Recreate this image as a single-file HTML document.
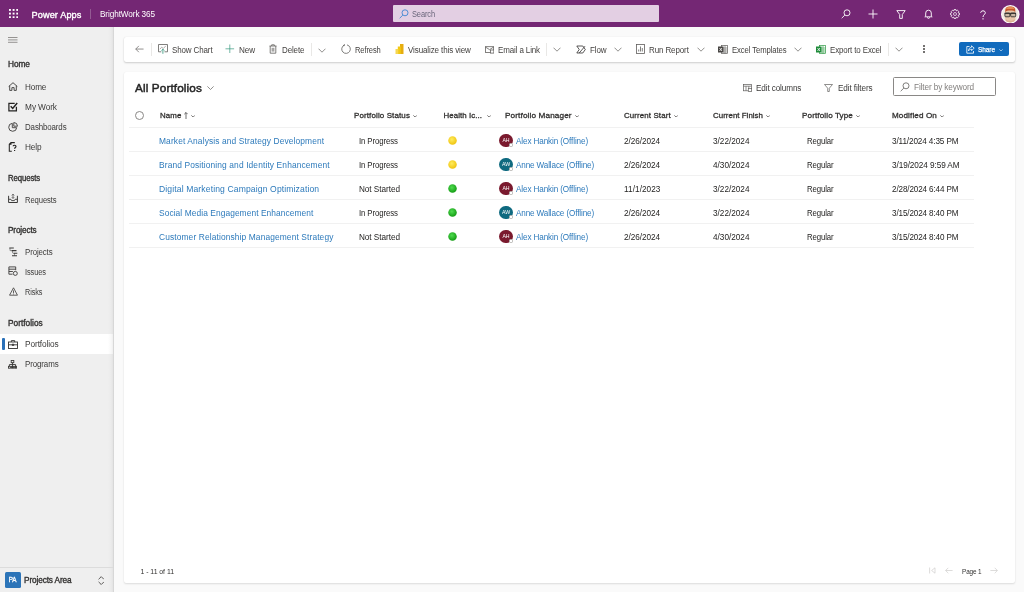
<!DOCTYPE html>
<html><head><meta charset="utf-8">
<style>
*{box-sizing:border-box;margin:0;padding:0}
body{will-change:transform;position:relative}
html,body{width:1024px;height:592px;overflow:hidden;background:#fafafa;font-family:"Liberation Sans",sans-serif;color:#323130}
.abs{position:absolute}
#top{position:absolute;left:0;top:0;width:1024px;height:27px;background:#742774;color:#fff}
#top .t{position:absolute;white-space:nowrap;line-height:1}
#side{position:absolute;left:0;top:27px;width:114px;height:565px;background:linear-gradient(to right,#efefef 0,#efefef 108px,#ebebeb 111px,#e3e3e3 113px,#d6d6d6 113px,#d9d9d9 114px)}
#side .h{position:absolute;left:8px;font-size:8.3px;-webkit-text-stroke:.35px #323130;color:#323130;line-height:1;white-space:nowrap}
#side .i{position:absolute;left:25.1px;font-size:8.3px;color:#3b3a39;line-height:1;white-space:nowrap}
#side svg{position:absolute;z-index:2}
#cmd{position:absolute;left:124px;top:37px;width:891px;height:25px;background:#fff;border-radius:2px;box-shadow:0 1px 2px rgba(0,0,0,.18),0 0 1px rgba(0,0,0,.1)}
#cmd .c{position:absolute;top:9.4px;font-size:8.3px;color:#444240;line-height:1;white-space:nowrap}
#cmd svg{position:absolute}
#card{position:absolute;left:123.600px;top:71.500px;width:891.400px;height:511.5px;background:#fff;border-radius:2px;box-shadow:0 1px 2px rgba(0,0,0,.12),0 0 1px rgba(0,0,0,.06)}
.txt{position:absolute;white-space:nowrap;line-height:1}
.hd{font-size:7.9px;-webkit-text-stroke:.3px #323130;color:#323130}
.cell{font-size:8.2px;color:#252423}
.lnk{font-size:8.4px;color:#2d7abb}
.row{position:absolute;left:129px;width:845px;height:1px;background:#f1f1f1}
.dot{position:absolute;width:8.4px;height:8.4px;margin:.3px;border-radius:50%}
.av{position:absolute;width:13.600px;height:13.600px;border-radius:50%;color:#fff;font-size:5.200px;text-align:center;line-height:13.600px;margin:-.5px 0 0 -.3px}
</style></head><body>
<div id="top">
  <svg class="abs" style="left:9px;top:8.800px" width="9.200" height="9.200" viewBox="0 0 9.200 9.200" fill="#fff"><rect x="0" y="0" width="1.900" height="1.900"></rect><rect x="3.65" y="0" width="1.900" height="1.900"></rect><rect x="7.3" y="0" width="1.900" height="1.900"></rect><rect x="0" y="3.65" width="1.900" height="1.900"></rect><rect x="3.65" y="3.65" width="1.900" height="1.900"></rect><rect x="7.3" y="3.65" width="1.900" height="1.900"></rect><rect x="0" y="7.3" width="1.900" height="1.900"></rect><rect x="3.65" y="7.3" width="1.900" height="1.900"></rect><rect x="7.3" y="7.3" width="1.900" height="1.900"></rect></svg>
  <svg class="abs" style="left:840.5px;top:9px" width="10" height="10" viewBox="0 0 10 10" fill="none" stroke="#fff" stroke-width=".9"><circle cx="6" cy="3.8" r="3"></circle><path d="M3.9 6L.7 9.2"></path></svg>
  <svg class="abs" style="left:868px;top:9px" width="10" height="10" viewBox="0 0 10 10" fill="none" stroke="#fff" stroke-width=".9"><path d="M5 .5v9M.5 5h9"></path></svg>
  <svg class="abs" style="left:895.5px;top:9.5px" width="10" height="9" viewBox="0 0 10 9" fill="none" stroke="#fff" stroke-width=".9"><path d="M.8.600h8.400L6.300 4.500v3.900H3.700V4.500z"></path></svg>
  <svg class="abs" style="left:923.5px;top:9px" width="9" height="10" viewBox="0 0 9 10" fill="none" stroke="#fff" stroke-width=".9"><path d="M1.7 7V4a2.8 2.8 0 0 1 5.6 0v3l.9.8H.8zM3.4 8.3a1.1 1.1 0 0 0 2.2 0"></path></svg>
  <svg class="abs" style="left:950.200px;top:9.200px" width="10" height="10" viewBox="0 0 10 10" fill="none" stroke="#fff" stroke-width=".85" stroke-linejoin="round"><circle cx="5" cy="5" r="1.500" stroke-width=".7"></circle><path d="M4.11 0.59L5.89 0.59L6.29 1.86L6.31 1.86L7.49 1.25L8.75 2.51L8.14 3.69L8.14 3.71L9.41 4.11L9.41 5.89L8.14 6.29L8.14 6.31L8.75 7.49L7.49 8.75L6.31 8.14L6.29 8.14L5.89 9.41L4.11 9.41L3.71 8.14L3.69 8.14L2.51 8.75L1.25 7.49L1.86 6.31L1.86 6.29L0.59 5.89L0.59 4.11L1.86 3.71L1.86 3.69L1.25 2.51L2.51 1.25L3.69 1.86L3.71 1.86z"></path></svg>
  <svg class="abs" style="left:979.600px;top:9.600px" width="6" height="10" viewBox="0 0 6 10" fill="none" stroke="#fff" stroke-width="1"><path d="M.7 2.800C.7.200 5.300.200 5.300 2.700c0 1.900-2.300 2.100-2.300 4.300M3 8.200v1.300"></path></svg>
  <svg class="abs" style="left:1001px;top:4.500px" width="18.600" height="18.600" viewBox="0 0 18.600 18.600"><circle cx="9.300" cy="9.300" r="9.300" fill="#fdf8fb"></circle><clipPath id="avc"><circle cx="9.300" cy="9.300" r="8.200"></circle></clipPath><g clip-path="url(#avc)"><rect x="0" y="0" width="19" height="19" fill="#f1e9e2"></rect><path d="M4.300 7.500C4 2.800 5 1.600 9.300 1.600s5.300 1.200 5 5.900z" fill="#c4552b"></path><path d="M5 4C5.500 2.300 7 1.800 9.300 1.800s3.800.5 4.300 2.200z" fill="#e58a55"></path><rect x="4.200" y="5.600" width="10.200" height="13" rx="3.500" fill="#e9c6aa"></rect><path d="M5 14c1.500 2.500 7 2.500 8.600 0v5H5z" fill="#dcb294"></path><rect x="3.900" y="8.100" width="5" height="3.700" rx=".9" fill="#c9b5a3" stroke="#2a2a2a" stroke-width=".85"></rect><rect x="9.700" y="8.100" width="5" height="3.700" rx=".9" fill="#c9b5a3" stroke="#2a2a2a" stroke-width=".85"></rect><path d="M3.500 8.300h11.600" stroke="#2a2a2a" stroke-width="1"></path><path d="M8.900 9.300h.8" stroke="#2a2a2a" stroke-width=".8"></path></g></svg>
  <div class="t" style="left: 31.5px; top: 10.7px; font-size: 9.2px; -webkit-text-stroke: 0.35px rgb(255, 255, 255); letter-spacing: 0.097px; transform-origin: 0px 50%; transform: scaleX(1);">Power Apps</div>
  <div class="abs" style="left:90px;top:8.5px;width:1px;height:10.5px;background:#935a93"></div>
  <div class="t" style="left: 100px; top: 11.1px; font-size: 8.2px; letter-spacing: -0.092px; transform-origin: 0px 50%; transform: scaleX(1);">BrightWork 365</div>
  <div class="abs" style="left:393px;top:5px;width:266px;height:17px;background:#e3cfe3;border-radius:1px"></div>
  <svg class="abs" style="left:399px;top:9px" width="10" height="10" viewBox="0 0 10 10" fill="none" stroke="#3f86d2" stroke-width=".9"><circle cx="6" cy="3.8" r="3"></circle><path d="M3.9 6L.7 9.2"></path></svg>
  <div class="t" style="left: 412px; top: 10.8px; font-size: 8.2px; color: rgb(105, 101, 122); letter-spacing: -0.12px; transform-origin: 0px 50%; transform: scaleX(0.9115);">Search</div>
</div>
<div id="side">
  <svg style="left:8px;top:9.8px" width="10" height="6" viewBox="0 0 10 6" fill="none" stroke="#3b3a39" stroke-width=".9"><path d="M0 .5h9.500M0 2.900h9.500M0 5.300h9.500" stroke="#8a8886"></path></svg>
  <svg style="left:8px;top:55px" width="10" height="9" viewBox="0 0 10 9" fill="none" stroke="#3b3a39" stroke-width=".9"><path d="M.7 4.500L5 .700l4.300 3.800M1.700 3.800v4.600h2.200V5.600h2.200v2.800h2.200V3.800"></path></svg>
  <svg style="left:8px;top:74.500px" width="10" height="10" viewBox="0 0 10 10" fill="none" stroke="#252423" stroke-width="1.250"><path d="M8.400 4.800v4H.9V1.300h5.800"></path><path d="M2.700 4.200l2 2.200L9.200 1" stroke-width="1.500"></path></svg>
  <svg style="left:8px;top:94.500px" width="10" height="10" viewBox="0 0 10 10" fill="none" stroke="#3b3a39" stroke-width=".9"><path d="M4.300 1.300a4 4 0 1 0 4.400 4.400H4.300z"></path><path d="M5.800.5a3.800 3.800 0 0 1 3.700 3.700H5.800z"></path></svg>
  <svg style="left:8px;top:114.500px" width="10" height="10" viewBox="0 0 10 10" fill="none" stroke="#3b3a39" stroke-width=".9"><path d="M3.800 9.300H1.300V2.300L3 .6h3.800M3 .6v1.700H1.300" stroke="#252423" stroke-width="1.050"></path><path d="M5.200 4.300c0-1.400 2.800-1.400 2.800.1 0 1.100-1.400 1.100-1.400 2.300M6.600 8v1.100" stroke="#252423" stroke-width="1.150"></path></svg>
  <svg style="left:8px;top:167.300px" width="10" height="9" viewBox="0 0 10 9" fill="none" stroke="#3b3a39" stroke-width=".9"><path d="M.6 1.800v6.700h8.800V1.800" stroke-width="1"></path><path d="M.6 5.300h2.300l.7 1.300h2.800l.7-1.300h2.300"></path><path d="M5 .2v4.200M3.800 1.400L5 .2l1.200 1.200M3.800 3.200L5 4.400l1.200-1.200" stroke-width=".7"></path></svg>
  <svg style="left:8.5px;top:219.500px" width="9" height="10" viewBox="0 0 9 10" fill="none" stroke="#3b3a39" stroke-width=".9"><path d="M.3 1h4.500M2.500 3.600h5M4.300 6.200h4M3 8.800h5" stroke-width="1.100"></path><path d="M1 1v2.600h1.500M3.500 3.600v2.600M5.500 6.200v2.600" stroke-width=".5"></path></svg>
  <svg style="left:8px;top:239px" width="10" height="10" viewBox="0 0 10 10" fill="none" stroke="#3b3a39" stroke-width=".9"><path d="M4.500 8.200H.9V.9h6.800v3.300M.9 3.200h6.800M.9 5.500h4"></path><circle cx="7.300" cy="7.400" r="2" fill="#efefef"></circle></svg>
  <svg style="left:8.500px;top:259.900px" width="9" height="9" viewBox="0 0 10 10" fill="none" stroke="#3b3a39" stroke-width=".9"><path d="M5 .9l4.400 8.200H.6z"></path><path d="M5 3.800v2.800M5 7.300v.9" stroke-width=".9"></path></svg>
  <svg style="left:8px;top:312.500px" width="10" height="9" viewBox="0 0 10 9" fill="none" stroke="#323130" stroke-width=".9"><rect x=".5" y="2" width="9" height="6.500"></rect><path d="M3.300 2V.6h3.400V2M.5 4.800h9M4.300 4.200h1.400v1.300H4.300z"></path></svg>
  <svg style="left:8.300px;top:332.500px" width="9" height="9" viewBox="0 0 9 9" fill="none" stroke="#3b3a39" stroke-width=".9"><rect x="3.200" y=".5" width="2.600" height="2.200"></rect><rect x=".5" y="6.300" width="1.900" height="1.900"></rect><rect x="3.550" y="6.300" width="1.900" height="1.900"></rect><rect x="6.600" y="6.300" width="1.900" height="1.900"></rect><path d="M4.500 2.700v3.600M1.450 6.300V4.500h6.100v1.800"></path></svg>
  <svg style="left:97.800px;top:548.500px" width="6.500" height="9.200" viewBox="0 0 7 10" fill="none" stroke="#484644" stroke-width=".95"><path d="M.6 3.600L3.500.7l2.900 2.900M.6 6.400l2.900 2.900 2.900-2.900"></path></svg>
  <div class="h" style="top: 32.9px; letter-spacing: -0.098px; transform-origin: 0px 50%; transform: scaleX(1);">Home</div>
  <div class="i" style="top: 55.9px; letter-spacing: -0.12px; transform-origin: 0px 50%; transform: scaleX(0.9812);">Home</div>
  <div class="i" style="top: 75.9px; letter-spacing: -0.118px; transform-origin: 0px 50%; transform: scaleX(1);">My Work</div>
  <div class="i" style="top: 95.9px; letter-spacing: -0.12px; transform-origin: 0px 50%; transform: scaleX(0.953);">Dashboards</div>
  <div class="i" style="top: 115.9px; letter-spacing: -0.12px; transform-origin: 0px 50%; transform: scaleX(0.9944);">Help</div>
  <div class="h" style="top: 146.9px; letter-spacing: -0.12px; transform-origin: 0px 50%; transform: scaleX(0.9386);">Requests</div>
  <div class="i" style="top: 168.7px; letter-spacing: -0.12px; transform-origin: 0px 50%; transform: scaleX(0.9239);">Requests</div>
  <div class="h" style="top: 198.9px; letter-spacing: -0.12px; transform-origin: 0px 50%; transform: scaleX(0.9822);">Projects</div>
  <div class="i" style="top: 221.3px; letter-spacing: -0.12px; transform-origin: 0px 50%; transform: scaleX(0.9478);">Projects</div>
  <div class="i" style="top: 241.3px; letter-spacing: -0.12px; transform-origin: 0px 50%; transform: scaleX(0.8919);">Issues</div>
  <div class="i" style="top: 261.3px; letter-spacing: -0.12px; transform-origin: 0px 50%; transform: scaleX(0.8762);">Risks</div>
  <div class="h" style="top: 291.9px; letter-spacing: 0.016px; transform-origin: 0px 50%; transform: scaleX(1);">Portfolios</div>
  <div class="abs" style="left:0;top:307px;width:113px;height:20px;background:linear-gradient(to right,#fff 0,#fff 108px,#f8f8f8 111px,#efefef 113px)"></div>
  <div class="abs" style="left:2.2px;top:311.2px;width:2.6px;height:11.6px;background:#2a70b8;border-radius:1px"></div>
  <div class="i" style="top: 313.3px; letter-spacing: -0.109px; transform-origin: 0px 50%; transform: scaleX(1);">Portfolios</div>
  <div class="i" style="top: 333.3px; letter-spacing: -0.12px; transform-origin: 0px 50%; transform: scaleX(0.9567);">Programs</div>
  <div class="abs" style="left:0;top:540px;width:113px;height:1px;background:#dcdcdc"></div>
  <div class="abs" style="left:4.6px;top:545px;width:16px;height:16px;background:#2c74b8;border-radius:1.5px;color:#fff;font-size:6.3px;-webkit-text-stroke:.3px #fff;text-align:center;line-height:16px">PA</div>
  <div class="h" style="left: 24.1px; top: 549.3px; font-size: 8.6px; letter-spacing: -0.12px; transform-origin: 0px 50%; transform: scaleX(0.9584);">Projects Area</div>
</div>
<svg width="0" height="0" style="position:absolute"><defs><radialGradient id="gy" cx=".42" cy=".38" r=".65"><stop offset="0" stop-color="#ffec5c"></stop><stop offset="1" stop-color="#efc20d"></stop></radialGradient><radialGradient id="gg" cx=".42" cy=".38" r=".65"><stop offset="0" stop-color="#4fdc4f"></stop><stop offset="1" stop-color="#129a12"></stop></radialGradient></defs></svg>
<div id="cmd">
  <svg style="left:10.500px;top:8.300px" width="9" height="8.100" viewBox="0 0 10 9" fill="none" stroke="#6e6c6a" stroke-width=".85"><path d="M9.5 4.500H.8M4.300 1L.8 4.500 4.300 8"></path></svg>
  <div class="abs" style="left:27px;top:6px;width:1px;height:13px;background:#e9e8e6"></div>
  <svg style="left:34px;top:7.300px" width="10" height="10" viewBox="0 0 10 10" fill="none" stroke="#605e5c" stroke-width=".8"><path d="M3.300 7.800H.5V.5h9v7.300H6.500"></path><path d="M1.800 5.200l1.900-2 1.600 1.300 2.600-2.700" stroke="#8a8886" stroke-width=".7"></path><path d="M4.900 9.800V5.300M3.500 6.600l1.400-1.400 1.400 1.400" stroke="#2f9478" stroke-width=".8"></path></svg>
  <div class="c" style="left: 47.5px; letter-spacing: -0.12px; transform-origin: 0px 50%; transform: scaleX(0.9607);">Show Chart</div>
  <svg style="left:101.200px;top:6.800px" width="9.600" height="9.600" viewBox="0 0 10 10" fill="none" stroke="#2f9478" stroke-width=".7"><path d="M5 .5v9M.5 5h9"></path></svg>
  <div class="c" style="left: 115px; letter-spacing: -0.12px; transform-origin: 0px 50%; transform: scaleX(0.9846);">New</div>
  <svg style="left:145px;top:7px" width="8" height="10" viewBox="0 0 8 10" fill="none" stroke="#605e5c" stroke-width=".8"><path d="M.5 2h7M2.7 2V.8h2.6V2M1.2 2v7.2h5.6V2M3.2 3.8v3.8M4.8 3.8v3.8"></path></svg>
  <div class="c" style="left: 157.5px; letter-spacing: -0.12px; transform-origin: 0px 50%; transform: scaleX(0.9585);">Delete</div>
  <div class="abs" style="left:187px;top:6px;width:1px;height:13px;background:#e9e8e6"></div>
  <svg style="left:194px;top:10.500px" width="8" height="5" viewBox="0 0 8 5" fill="none" stroke="#6b6967" stroke-width=".75"><path d="M.5.7L4 4.2 7.5.7"></path></svg>
  <svg style="left:217px;top:7px" width="10" height="10" viewBox="0 0 10 10" fill="none" stroke="#605e5c" stroke-width=".8"><path d="M3.2 1.2A4.3 4.3 0 1 0 6 .9M3.4.2v1.4H2"></path></svg>
  <div class="c" style="left: 230.5px; letter-spacing: -0.12px; transform-origin: 0px 50%; transform: scaleX(0.9107);">Refresh</div>
  <svg style="left:271px;top:7px" width="9" height="10" viewBox="0 0 9 10"><path d="M5 0h3.5v10H5z" fill="#e6ad10"></path><path d="M2.8 2.5h3v7.5h-3z" fill="#f2c811"></path><path d="M.5 5h2.8v5H.5z" fill="#f6d751"></path></svg>
  <div class="c" style="left: 284px; letter-spacing: -0.12px; transform-origin: 0px 50%; transform: scaleX(0.9675);">Visualize this view</div>
  <svg style="left:360.500px;top:8.800px" width="9.500" height="7.800" viewBox="0 0 11 9" fill="none" stroke="#605e5c" stroke-width=".9"><rect x=".5" y=".8" width="9.5" height="6.8"></rect><path d="M.5 1.2l4.8 3 4.7-3"></path><rect x="6.3" y="4.6" width="4" height="3.6" fill="#fff"></rect></svg>
  <div class="c" style="left: 373.5px; letter-spacing: -0.12px; transform-origin: 0px 50%; transform: scaleX(0.9597);">Email a Link</div>
  <div class="abs" style="left:422px;top:6px;width:1px;height:13px;background:#e9e8e6"></div>
  <svg style="left:429px;top:10px" width="8" height="5" viewBox="0 0 8 5" fill="none" stroke="#6b6967" stroke-width=".75"><path d="M.5.7L4 4.2 7.5.7"></path></svg>
  <svg style="left:452px;top:8px" width="10" height="9" viewBox="0 0 10 9" fill="none" stroke="#323130" stroke-width=".8"><path d="M.8 1h6l2.5 3.5L6.8 8h-6l2.4-3.5zM3.2 8L9 1.2"></path></svg>
  <div class="c" style="left: 465.5px; letter-spacing: -0.12px; transform-origin: 0px 50%; transform: scaleX(0.9679);">Flow</div>
  <svg style="left:489.5px;top:10px" width="8" height="5" viewBox="0 0 8 5" fill="none" stroke="#6b6967" stroke-width=".75"><path d="M.5.7L4 4.2 7.5.7"></path></svg>
  <svg style="left:511.5px;top:7px" width="9" height="10" viewBox="0 0 9 10" fill="none" stroke="#605e5c" stroke-width=".8"><rect x=".5" y=".5" width="8" height="9"></rect><path d="M2.7 7.5v-2M4.5 7.5V2.5M6.3 7.5V4"></path></svg>
  <div class="c" style="left: 524.5px; letter-spacing: -0.12px; transform-origin: 0px 50%; transform: scaleX(0.964);">Run Report</div>
  <svg style="left:572.5px;top:10px" width="8" height="5" viewBox="0 0 8 5" fill="none" stroke="#6b6967" stroke-width=".75"><path d="M.5.7L4 4.2 7.5.7"></path></svg>
  <svg style="left:594px;top:7.5px" width="10" height="9" viewBox="0 0 10 9"><rect x="3.5" y=".5" width="6" height="8" fill="#fff" stroke="#605e5c" stroke-width=".7"></rect><path d="M5 3h4.5M5 5h4.5M5 7h4.5M7 .5v8" stroke="#605e5c" stroke-width=".6"></path><rect x="0" y="1.5" width="5.5" height="6" fill="#484644"></rect><path d="M1.5 3l2.5 3M4 3L1.5 6" stroke="#fff" stroke-width=".8"></path></svg>
  <div class="c" style="left: 607.5px; letter-spacing: -0.12px; transform-origin: 0px 50%; transform: scaleX(0.9321);">Excel Templates</div>
  <svg style="left:670px;top:10px" width="8" height="5" viewBox="0 0 8 5" fill="none" stroke="#6b6967" stroke-width=".75"><path d="M.5.7L4 4.2 7.5.7"></path></svg>
  <svg style="left:692px;top:7.5px" width="10" height="9" viewBox="0 0 10 9"><rect x="3.5" y=".5" width="6" height="8" fill="#fff" stroke="#2f9a45" stroke-width=".7"></rect><path d="M5 3h4.5M5 5h4.5M5 7h4.5M7 .5v8" stroke="#2f9a45" stroke-width=".6"></path><rect x="0" y="1.5" width="5.5" height="6" fill="#1e8b3a"></rect><path d="M1.5 3l2.5 3M4 3L1.5 6" stroke="#fff" stroke-width=".8"></path></svg>
  <div class="c" style="left: 705.5px; letter-spacing: -0.12px; transform-origin: 0px 50%; transform: scaleX(0.9537);">Export to Excel</div>
  <div class="abs" style="left:764px;top:6px;width:1px;height:13px;background:#e9e8e6"></div>
  <svg style="left:771px;top:10px" width="8" height="5" viewBox="0 0 8 5" fill="none" stroke="#6b6967" stroke-width=".75"><path d="M.5.7L4 4.2 7.5.7"></path></svg>
  <div class="abs" style="left:799.400px;top:8.400px;width:1.500px;height:1.500px;background:#5a5856;border-radius:50%;box-shadow:0 3px 0 #5a5856,0 6px 0 #5a5856"></div>
  <div class="abs" style="left:835px;top:5.3px;width:50px;height:14px;background:#116bbd;border-radius:2px"></div>
  <svg style="left:841.5px;top:8px" width="9" height="9" viewBox="0 0 9 9" fill="none" stroke="#fff" stroke-width=".8"><path d="M3.5 1.5H.8v6.7h6.7V6M5.5.8l2.7 2.4-2.7 2.4V4.2C4 4.2 3 4.8 2.5 6c0-2.2 1.2-3.6 3-3.8z"></path></svg>
  <div class="c" style="left: 854px; top: 9.2px; color: rgb(255, 255, 255); font-size: 7.8px; -webkit-text-stroke: 0.25px rgb(255, 255, 255); letter-spacing: -0.12px; transform-origin: 0px 50%; transform: scaleX(0.8408);">Share</div>
  <svg style="left:875px;top:11.800px" width="4" height="2.400" viewBox="0 0 5 3" fill="none" stroke="#fff" stroke-width=".7"><path d="M.4.4l2.1 2.1L4.6.4"></path></svg>
</div>
<div id="card"></div>
<div class="txt" style="left: 135px; top: 82px; font-size: 11.6px; -webkit-text-stroke: 0.45px rgb(36, 36, 36); color: rgb(36, 36, 36); letter-spacing: 0.12px; transform-origin: 0px 50%; transform: scaleX(1.0132);">All Portfolios</div>
<svg class="abs" style="left:206.5px;top:86px" width="7" height="4" viewBox="0 0 7 4" fill="none" stroke="#605e5c" stroke-width=".7"><path d="M.4.4l3.1 3.1L6.6.4"></path></svg>
<svg class="abs" style="left:743px;top:83.5px" width="9" height="8" viewBox="0 0 9 8" fill="none" stroke="#605e5c" stroke-width=".7"><rect x=".4" y=".4" width="8" height="6.4"></rect><path d="M.4 2.2h8M3 2.2v4.6M5.8 2.2v2"></path><rect x="5.3" y="4.6" width="3.4" height="3" fill="#fff"></rect></svg>
<div class="txt" style="left: 756px; top: 84.3px; font-size: 8.3px; color: rgb(59, 58, 57); letter-spacing: -0.12px; transform-origin: 0px 50%; transform: scaleX(0.9834);">Edit columns</div>
<svg class="abs" style="left:824px;top:83.5px" width="9" height="8" viewBox="0 0 9 8" fill="none" stroke="#605e5c" stroke-width=".7"><path d="M.5.5h8L5.3 4.2v3.3H3.7V4.2z"></path></svg>
<div class="txt" style="left: 838px; top: 84.3px; font-size: 8.3px; color: rgb(59, 58, 57); letter-spacing: -0.12px; transform-origin: 0px 50%; transform: scaleX(0.9857);">Edit filters</div>
<div class="abs" style="left:893px;top:77px;width:103px;height:18.5px;border:1px solid #8a8886;border-radius:1.5px;background:#fff"></div>
<svg class="abs" style="left:900px;top:81.5px" width="10" height="10" viewBox="0 0 10 10" fill="none" stroke="#605e5c" stroke-width=".8"><circle cx="6" cy="3.8" r="3"></circle><path d="M3.9 6L.7 9.2"></path></svg>
<div class="txt" style="left: 914px; top: 82.8px; font-size: 8.3px; color: rgb(128, 126, 124); letter-spacing: -0.12px; transform-origin: 0px 50%; transform: scaleX(0.9889);">Filter by keyword</div>
<div class="abs" style="left:135px;top:111px;width:9px;height:9px;border:.8px solid #8a8886;border-radius:50%"></div>
<div class="txt hd" style="left: 159.5px; top: 112.3px; letter-spacing: 0.109px; transform-origin: 0px 50%; transform: scaleX(1.0007);">Name</div>
<svg class="abs" style="left:184.200px;top:111.500px" width="4" height="7" viewBox="0 0 4 7" fill="none" stroke="#323130" stroke-width=".7"><path d="M2 7V.6M.3 2.2L2 .5l1.7 1.7"></path></svg>
<svg class="abs" style="left:190.5px;top:114.5px" width="4.200" height="2.600" viewBox="0 0 5 3" fill="none" stroke="#484644" stroke-width=".9"><path d="M.4.4l2.1 2.1L4.6.4"></path></svg>
<div class="txt hd" style="left: 354px; top: 112.3px; letter-spacing: 0.12px; transform-origin: 0px 50%; transform: scaleX(1.0101);">Portfolio Status</div>
<svg class="abs" style="left:413px;top:114.5px" width="4.200" height="2.600" viewBox="0 0 5 3" fill="none" stroke="#484644" stroke-width=".9"><path d="M.4.4l2.1 2.1L4.6.4"></path></svg>
<div class="txt hd" style="left: 443.5px; top: 112.3px; letter-spacing: 0.065px; transform-origin: 0px 50%; transform: scaleX(1);">Health Ic...</div>
<svg class="abs" style="left:486.5px;top:114.5px" width="4.200" height="2.600" viewBox="0 0 5 3" fill="none" stroke="#484644" stroke-width=".9"><path d="M.4.4l2.1 2.1L4.6.4"></path></svg>
<div class="txt hd" style="left: 505px; top: 112.3px; letter-spacing: 0.12px; transform-origin: 0px 50%; transform: scaleX(1.0369);">Portfolio Manager</div>
<svg class="abs" style="left:574.7px;top:114.5px" width="4.200" height="2.600" viewBox="0 0 5 3" fill="none" stroke="#484644" stroke-width=".9"><path d="M.4.4l2.1 2.1L4.6.4"></path></svg>
<div class="txt hd" style="left: 624px; top: 112.3px; letter-spacing: 0.12px; transform-origin: 0px 50%; transform: scaleX(1.0003);">Current Start</div>
<svg class="abs" style="left:673.75px;top:114.5px" width="4.200" height="2.600" viewBox="0 0 5 3" fill="none" stroke="#484644" stroke-width=".9"><path d="M.4.4l2.1 2.1L4.6.4"></path></svg>
<div class="txt hd" style="left: 713px; top: 112.3px; letter-spacing: 0.031px; transform-origin: 0px 50%; transform: scaleX(1);">Current Finish</div>
<svg class="abs" style="left:766px;top:114.5px" width="4.200" height="2.600" viewBox="0 0 5 3" fill="none" stroke="#484644" stroke-width=".9"><path d="M.4.4l2.1 2.1L4.6.4"></path></svg>
<div class="txt hd" style="left: 802px; top: 112.3px; letter-spacing: 0.12px; transform-origin: 0px 50%; transform: scaleX(1.0242);">Portfolio Type</div>
<svg class="abs" style="left:856px;top:114.5px" width="4.200" height="2.600" viewBox="0 0 5 3" fill="none" stroke="#484644" stroke-width=".9"><path d="M.4.4l2.1 2.1L4.6.4"></path></svg>
<div class="txt hd" style="left: 892px; top: 112.3px; letter-spacing: 0.12px; transform-origin: 0px 50%; transform: scaleX(1.0256);">Modified On</div>
<svg class="abs" style="left:940px;top:114.5px" width="4.200" height="2.600" viewBox="0 0 5 3" fill="none" stroke="#484644" stroke-width=".9"><path d="M.4.4l2.1 2.1L4.6.4"></path></svg>
<div class="row" style="top:127px"></div>
<div class="txt lnk" style="left: 159px; top: 136.7px; letter-spacing: 0.12px; transform-origin: 0px 50%; transform: scaleX(1.0019);">Market Analysis and Strategy Development</div>
<div class="txt cell" style="left: 359px; top: 137.7px; letter-spacing: -0.12px; transform-origin: 0px 50%; transform: scaleX(0.9557);">In Progress</div>
<svg class="abs" style="left:447.900px;top:136px" width="9" height="9" viewBox="0 0 9 9"><circle cx="4.500" cy="4.500" r="4.250" fill="url(#gy)"></circle></svg>
<div class="av" style="left:499.5px;top:134.0px;background:#7a1a2e">AH</div>
<div class="abs" style="left:508.800px;top:142.8px;width:4.600px;height:4.600px;border-radius:1.500px;background:#fff;border:.7px solid #b5b2af"></div>
<div class="txt lnk" style="left: 516px; top: 137px; font-size: 8.3px; letter-spacing: -0.12px; transform-origin: 0px 50%; transform: scaleX(0.9806);">Alex Hankin (Offline)</div>
<div class="txt cell" style="left: 624px; top: 137.7px; letter-spacing: -0.049px; transform-origin: 0px 50%; transform: scaleX(1.0004);">2/26/2024</div>
<div class="txt cell" style="left: 713px; top: 137.7px; letter-spacing: 0.007px; transform-origin: 0px 50%; transform: scaleX(1);">3/22/2024</div>
<div class="txt cell" style="left: 807px; top: 137.7px; letter-spacing: -0.12px; transform-origin: 0px 50%; transform: scaleX(0.9517);">Regular</div>
<div class="txt cell" style="left: 891.6px; top: 137.7px; letter-spacing: -0.12px; transform-origin: 0px 50%; transform: scaleX(0.9978);">3/11/2024 4:35 PM</div>
<div class="row" style="top:151px"></div>
<div class="txt lnk" style="left: 159px; top: 160.7px; letter-spacing: 0.12px; transform-origin: 0px 50%; transform: scaleX(1.0025);">Brand Positioning and Identity Enhancement</div>
<div class="txt cell" style="left: 359px; top: 161.7px; letter-spacing: -0.12px; transform-origin: 0px 50%; transform: scaleX(0.9557);">In Progress</div>
<svg class="abs" style="left:447.900px;top:160px" width="9" height="9" viewBox="0 0 9 9"><circle cx="4.500" cy="4.500" r="4.250" fill="url(#gy)"></circle></svg>
<div class="av" style="left:499.5px;top:158.0px;background:#0f6a80">AW</div>
<div class="abs" style="left:508.800px;top:166.8px;width:4.600px;height:4.600px;border-radius:1.500px;background:#fff;border:.7px solid #b5b2af"></div>
<div class="txt lnk" style="left: 516px; top: 161px; font-size: 8.3px; letter-spacing: -0.12px; transform-origin: 0px 50%; transform: scaleX(0.9761);">Anne Wallace (Offline)</div>
<div class="txt cell" style="left: 624px; top: 161.7px; letter-spacing: -0.049px; transform-origin: 0px 50%; transform: scaleX(1.0004);">2/26/2024</div>
<div class="txt cell" style="left: 713px; top: 161.7px; letter-spacing: 0.007px; transform-origin: 0px 50%; transform: scaleX(1);">4/30/2024</div>
<div class="txt cell" style="left: 807px; top: 161.7px; letter-spacing: -0.12px; transform-origin: 0px 50%; transform: scaleX(0.9517);">Regular</div>
<div class="txt cell" style="left: 891.6px; top: 161.7px; letter-spacing: -0.074px; transform-origin: 0px 50%; transform: scaleX(1.0002);">3/19/2024 9:59 AM</div>
<div class="row" style="top:175px"></div>
<div class="txt lnk" style="left: 159px; top: 184.7px; letter-spacing: 0.12px; transform-origin: 0px 50%; transform: scaleX(1.0244);">Digital Marketing Campaign Optimization</div>
<div class="txt cell" style="left: 359px; top: 185.7px; letter-spacing: -0.047px; transform-origin: 0px 50%; transform: scaleX(0.9998);">Not Started</div>
<svg class="abs" style="left:447.900px;top:184px" width="9" height="9" viewBox="0 0 9 9"><circle cx="4.500" cy="4.500" r="4.250" fill="url(#gg)"></circle></svg>
<div class="av" style="left:499.5px;top:182.0px;background:#7a1a2e">AH</div>
<div class="abs" style="left:508.800px;top:190.8px;width:4.600px;height:4.600px;border-radius:1.500px;background:#fff;border:.7px solid #b5b2af"></div>
<div class="txt lnk" style="left: 516px; top: 185px; font-size: 8.3px; letter-spacing: -0.12px; transform-origin: 0px 50%; transform: scaleX(0.9806);">Alex Hankin (Offline)</div>
<div class="txt cell" style="left: 624px; top: 185.7px; letter-spacing: 0.075px; transform-origin: 0px 50%; transform: scaleX(1);">11/1/2023</div>
<div class="txt cell" style="left: 713px; top: 185.7px; letter-spacing: 0.007px; transform-origin: 0px 50%; transform: scaleX(1);">3/22/2024</div>
<div class="txt cell" style="left: 807px; top: 185.7px; letter-spacing: -0.12px; transform-origin: 0px 50%; transform: scaleX(0.9517);">Regular</div>
<div class="txt cell" style="left: 891.6px; top: 185.7px; letter-spacing: -0.12px; transform-origin: 0px 50%; transform: scaleX(0.9887);">2/28/2024 6:44 PM</div>
<div class="row" style="top:199px"></div>
<div class="txt lnk" style="left: 159px; top: 208.7px; letter-spacing: 0.078px; transform-origin: 0px 50%; transform: scaleX(0.9999);">Social Media Engagement Enhancement</div>
<div class="txt cell" style="left: 359px; top: 209.7px; letter-spacing: -0.12px; transform-origin: 0px 50%; transform: scaleX(0.9557);">In Progress</div>
<svg class="abs" style="left:447.900px;top:208px" width="9" height="9" viewBox="0 0 9 9"><circle cx="4.500" cy="4.500" r="4.250" fill="url(#gg)"></circle></svg>
<div class="av" style="left:499.5px;top:206.0px;background:#0f6a80">AW</div>
<div class="abs" style="left:508.800px;top:214.8px;width:4.600px;height:4.600px;border-radius:1.500px;background:#fff;border:.7px solid #b5b2af"></div>
<div class="txt lnk" style="left: 516px; top: 209px; font-size: 8.3px; letter-spacing: -0.12px; transform-origin: 0px 50%; transform: scaleX(0.9761);">Anne Wallace (Offline)</div>
<div class="txt cell" style="left: 624px; top: 209.7px; letter-spacing: -0.049px; transform-origin: 0px 50%; transform: scaleX(1.0004);">2/26/2024</div>
<div class="txt cell" style="left: 713px; top: 209.7px; letter-spacing: 0.007px; transform-origin: 0px 50%; transform: scaleX(1);">3/22/2024</div>
<div class="txt cell" style="left: 807px; top: 209.7px; letter-spacing: -0.12px; transform-origin: 0px 50%; transform: scaleX(0.9517);">Regular</div>
<div class="txt cell" style="left: 891.6px; top: 209.7px; letter-spacing: -0.12px; transform-origin: 0px 50%; transform: scaleX(0.9887);">3/15/2024 8:40 PM</div>
<div class="row" style="top:223px"></div>
<div class="txt lnk" style="left: 159px; top: 232.7px; letter-spacing: 0.12px; transform-origin: 0px 50%; transform: scaleX(1.0007);">Customer Relationship Management Strategy</div>
<div class="txt cell" style="left: 359px; top: 233.7px; letter-spacing: -0.047px; transform-origin: 0px 50%; transform: scaleX(0.9998);">Not Started</div>
<svg class="abs" style="left:447.900px;top:232px" width="9" height="9" viewBox="0 0 9 9"><circle cx="4.500" cy="4.500" r="4.250" fill="url(#gg)"></circle></svg>
<div class="av" style="left:499.5px;top:230.0px;background:#7a1a2e">AH</div>
<div class="abs" style="left:508.800px;top:238.8px;width:4.600px;height:4.600px;border-radius:1.500px;background:#fff;border:.7px solid #b5b2af"></div>
<div class="txt lnk" style="left: 516px; top: 233px; font-size: 8.3px; letter-spacing: -0.12px; transform-origin: 0px 50%; transform: scaleX(0.9806);">Alex Hankin (Offline)</div>
<div class="txt cell" style="left: 624px; top: 233.7px; letter-spacing: -0.049px; transform-origin: 0px 50%; transform: scaleX(1.0004);">2/26/2024</div>
<div class="txt cell" style="left: 713px; top: 233.7px; letter-spacing: 0.007px; transform-origin: 0px 50%; transform: scaleX(1);">4/30/2024</div>
<div class="txt cell" style="left: 807px; top: 233.7px; letter-spacing: -0.12px; transform-origin: 0px 50%; transform: scaleX(0.9517);">Regular</div>
<div class="txt cell" style="left: 891.6px; top: 233.7px; letter-spacing: -0.12px; transform-origin: 0px 50%; transform: scaleX(0.9887);">3/15/2024 8:40 PM</div>
<div class="row" style="top:247px"></div>
<div class="txt" style="left: 140.5px; top: 568.6px; font-size: 6.9px; color: rgb(50, 49, 48); letter-spacing: -0.029px; transform-origin: 0px 50%; transform: scaleX(1);">1 - 11 of 11</div>
<svg class="abs" style="left:929px;top:567px" width="7" height="7" viewBox="0 0 7 7" fill="none" stroke="#cfcdcb" stroke-width=".7"><path d="M.6.5v6M6 .8L2.6 3.5 6 6.2z"></path></svg>
<svg class="abs" style="left:944.5px;top:567px" width="8" height="7" viewBox="0 0 8 7" fill="none" stroke="#cfcdcb" stroke-width=".7"><path d="M7.6 3.5H.7M3.3.8L.6 3.5l2.7 2.7"></path></svg>
<div class="txt" style="left: 961.5px; top: 568.6px; font-size: 6.9px; color: rgb(50, 49, 48); letter-spacing: -0.12px; transform-origin: 0px 50%; transform: scaleX(0.9231);">Page 1</div>
<svg class="abs" style="left:990px;top:567px" width="8" height="7" viewBox="0 0 8 7" fill="none" stroke="#cfcdcb" stroke-width=".7"><path d="M.4 3.5h6.9M4.7.8l2.7 2.7-2.7 2.7"></path></svg>

</body></html>
